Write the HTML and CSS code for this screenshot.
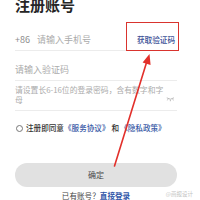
FILE: index.html
```html
<!DOCTYPE html>
<html lang="zh">
<head>
<meta charset="utf-8">
<link rel="stylesheet" href="styles.css">
</head>
<body>
<div class="page">
  <h1 class="title">注册账号</h1>
  <div class="field">
    <span class="prefix">+86</span>
    <span class="ph">请输入手机号</span>
    <span class="getcode">获取验证码</span>
  </div>
  <div class="field">
    <span class="ph">请输入验证码</span>
  </div>
  <div class="field small">
    <span class="ph">请设置长6-16位的登录密码，含有数字和字母</span>
    <svg class="eye" width="9" height="5" viewBox="0 0 9 5"><path d="M0.8 0.8 Q4.5 3.6 8.2 0.8 M2 2.2 L1.4 3.4 M4.5 2.9 L4.5 4.3 M7 2.2 L7.6 3.4" fill="none" stroke="#9a9a9a" stroke-width="0.7"/></svg>
  </div>
  <div class="agree">
    <span class="radio"></span>
    <span class="dark">注册即同意</span>
    <span class="link">《服务协议》</span>
    <span class="dark and">和</span>
    <span class="link">《隐私政策》</span>
  </div>
  <div class="submit">确定</div>
  <div class="login">已有账号？<span class="loginlink">直接登录</span></div>
  <span class="mark">@画报设计</span>
  <svg class="arrow" width="200" height="200" viewBox="0 0 200 200">
    <line x1="114.5" y1="169" x2="147" y2="64" stroke="#e2302b" stroke-width="1.6" stroke-linecap="round"/>
    <polygon points="149.5,57 142.6,65.6 150.6,68" fill="#e2302b"/>
  </svg>
</div>
</body>
</html>
```

FILE: styles.css
```css
html, body {
  margin: 0;
  padding: 0;
  background: #ffffff;
  overflow: hidden;
}
body {
  width: 200px;
  height: 200px;
  font-family: "Noto Sans CJK SC", "Noto Sans", sans-serif;
}
.page {
  position: relative;
  width: 200px;
  height: 200px;
  padding: 0 23px 0 15px;
  box-sizing: border-box;
}
.title {
  margin: -3px 0 0 0;
  height: 24px;
  font-size: 15px;
  line-height: 16px;
  font-weight: 700;
  color: #262626;
}
.field {
  display: flex;
  align-items: flex-end;
  height: 30px;
  box-sizing: border-box;
  border-bottom: 1px solid #ececec;
  font-size: 9px;
  line-height: 10px;
}
.field .prefix,
.field .ph {
  margin-bottom: 5px;
}
.prefix {
  color: #8c8c8c;
  width: 22px;
}
.ph {
  color: #ababab;
}
.getcode {
  margin-left: auto;
  margin-right: -2px;
  margin-bottom: -1px;
  padding: 12px 3px 5px 10px;
  border: 1.5px solid #d9342e;
  font-size: 7.6px;
  color: #3a4f96;
  font-weight: 500;
}
.field.small {
  font-size: 7.8px;
}
.eye {
  margin-left: auto;
  margin-right: 2px;
  margin-bottom: 8px;
}
.agree {
  display: flex;
  align-items: center;
  margin-top: 12px;
  height: 10px;
  font-size: 7.6px;
  line-height: 10px;
}
.radio {
  width: 5px;
  height: 5px;
  border: 1px solid #777;
  border-radius: 50%;
  margin: 0 3px 0 1px;
}
.dark {
  color: #333;
  font-weight: 500;
}
.and {
  margin: 0 1px 0 2px;
}
.link {
  color: #3a5aa6;
  font-weight: 500;
}
.submit {
  margin-top: 30px;
  height: 24px;
  border-radius: 12px;
  background: #e1e1e1;
  color: #4a4a4a;
  font-size: 8px;
  line-height: 24px;
  text-align: center;
}
.login {
  margin-top: 4px;
  text-align: center;
  font-size: 7.6px;
  line-height: 10px;
  color: #444;
}
.loginlink {
  color: #2f55a8;
  font-weight: 700;
}
.mark {
  position: absolute;
  right: 7px;
  top: 193px;
  font-size: 5.5px;
  color: #c2c2c2;
}
.arrow {
  position: absolute;
  left: 0;
  top: 0;
  pointer-events: none;
}
```
